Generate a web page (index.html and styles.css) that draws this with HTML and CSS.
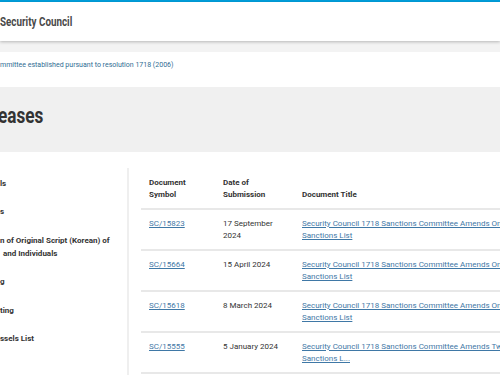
FILE: index.html
```html
<!DOCTYPE html>
<html lang="en">
<head>
    <meta charset="UTF-8">
    <meta name="viewport" content="width=device-width, initial-scale=1.0">
    <title>Press Releases | Security Council</title>
    <link rel="stylesheet" href="styles.css">
</head>
<body>
    <div class="topbar"></div>
    <header class="site-header">
        <span class="site-name">Security Council</span>
    </header>

    <div class="crumbs">
        <div class="breadcrumb">
            <a href="#">mmittee established pursuant to resolution 1718 (2006)</a>
        </div>
    </div>

    <div class="page-title">
        <h1><span class="narrow">eases</span></h1>
    </div>

    <main class="content">
        <nav class="sidebar">
            <a href="#">ls</a>
            <a href="#">s</a>
            <a href="#"><span class="line">n of Original Script (Korean) of</span><span class="line cont">and Individuals</span></a>
            <a href="#">g</a>
            <a href="#">ting</a>
            <a href="#">ssels List</a>
        </nav>

        <section class="docs">
            <table class="doc-table">
                <thead>
                    <tr>
                        <th class="col-symbol">Document<br>Symbol</th>
                        <th class="col-date">Date of<br>Submission</th>
                        <th class="col-title"><br>Document Title</th>
                    </tr>
                </thead>
                <tbody>
                    <tr>
                        <td><a href="#">SC/15823</a></td>
                        <td>17 September<br>2024</td>
                        <td><a href="#">Security Council 1718 Sanctions Committee Amends One Entry on Its<br>Sanctions List</a></td>
                    </tr>
                    <tr>
                        <td><a href="#">SC/15664</a></td>
                        <td>15 April 2024</td>
                        <td><a href="#">Security Council 1718 Sanctions Committee Amends One Entry on Its<br>Sanctions List</a></td>
                    </tr>
                    <tr>
                        <td><a href="#">SC/15618</a></td>
                        <td>8 March 2024</td>
                        <td><a href="#">Security Council 1718 Sanctions Committee Amends One Entry on Its<br>Sanctions List</a></td>
                    </tr>
                    <tr>
                        <td><a href="#">SC/15555</a></td>
                        <td>5 January 2024</td>
                        <td><a href="#">Security Council 1718 Sanctions Committee Amends Two Entries on Its<br>Sanctions L...</a></td>
                    </tr>
                </tbody>
            </table>
        </section>
    </main>
</body>
</html>
```

FILE: styles.css
```css
body {
    margin: 0;
    padding: 0;
    font-family: Roboto, "Liberation Sans", sans-serif;
    color: #333;
    background-color: #fff;
    overflow: hidden;
}
.topbar {
    height: 2px;
    background-color: #009edb;
}
.site-header {
    position: relative;
    height: 39px;
    display: flex;
    align-items: center;
    background-color: #fff;
    box-shadow: 0 1px 3px rgba(0, 0, 0, 0.25);
}
/* no condensed face installed, so squeeze the regular one */
.site-name {
    display: inline-block;
    font-weight: 700;
    font-size: 12px;
    color: #4a4a4a;
    transform: scaleX(0.82);
    transform-origin: left center;
}
.crumbs {
    background-color: #f3f3f3;
    padding-top: 11px;
}
.breadcrumb {
    background-color: #fff;
    height: 26px;
    padding-top: 8px;
    font-size: 7px;
    line-height: 10px;
}
.breadcrumb a {
    color: #2f6d93;
    text-decoration: none;
}
.page-title {
    margin-top: 1px;
    background-color: #f0f0f0;
    height: 65px;
    box-sizing: border-box;
    padding-top: 16px;
}
.page-title h1 {
    margin: 0;
    font-weight: 700;
    font-size: 22px;
    line-height: 26px;
    color: #333;
}
.narrow {
    display: inline-block;
    margin-left: -2px;
    transform: scaleX(0.78);
    transform-origin: left center;
}
.content {
    display: flex;
    padding-top: 16px;
}
.sidebar {
    flex: 0 0 127px;
    border-right: 2px solid #efefef;
    min-height: 220px;
}
.sidebar a {
    display: block;
    padding: 8.5px 12px 7px 0;
    font-size: 8px;
    font-weight: 700;
    line-height: 13px;
    color: #333;
    text-decoration: none;
}
.sidebar .line {
    display: block;
    white-space: nowrap;
}
.sidebar .cont {
    text-indent: 3px;
}
.docs {
    flex: 1;
    padding-left: 12px;
}
.doc-table {
    border-collapse: collapse;
    width: 640px;
    font-size: 8px;
    line-height: 12px;
}
.doc-table th {
    text-align: left;
    vertical-align: top;
    font-weight: 700;
    padding: 9px 8px 7px;
    border-bottom: 2px solid #e8e8e8;
}
.doc-table td {
    vertical-align: top;
    padding: 8px 8px 7px;
    border-bottom: 2px solid #e8e8e8;
}
.col-symbol {
    width: 58px;
}
.col-date {
    width: 63px;
}
.doc-table a {
    color: #3f78a6;
    text-decoration: underline;
}
```
